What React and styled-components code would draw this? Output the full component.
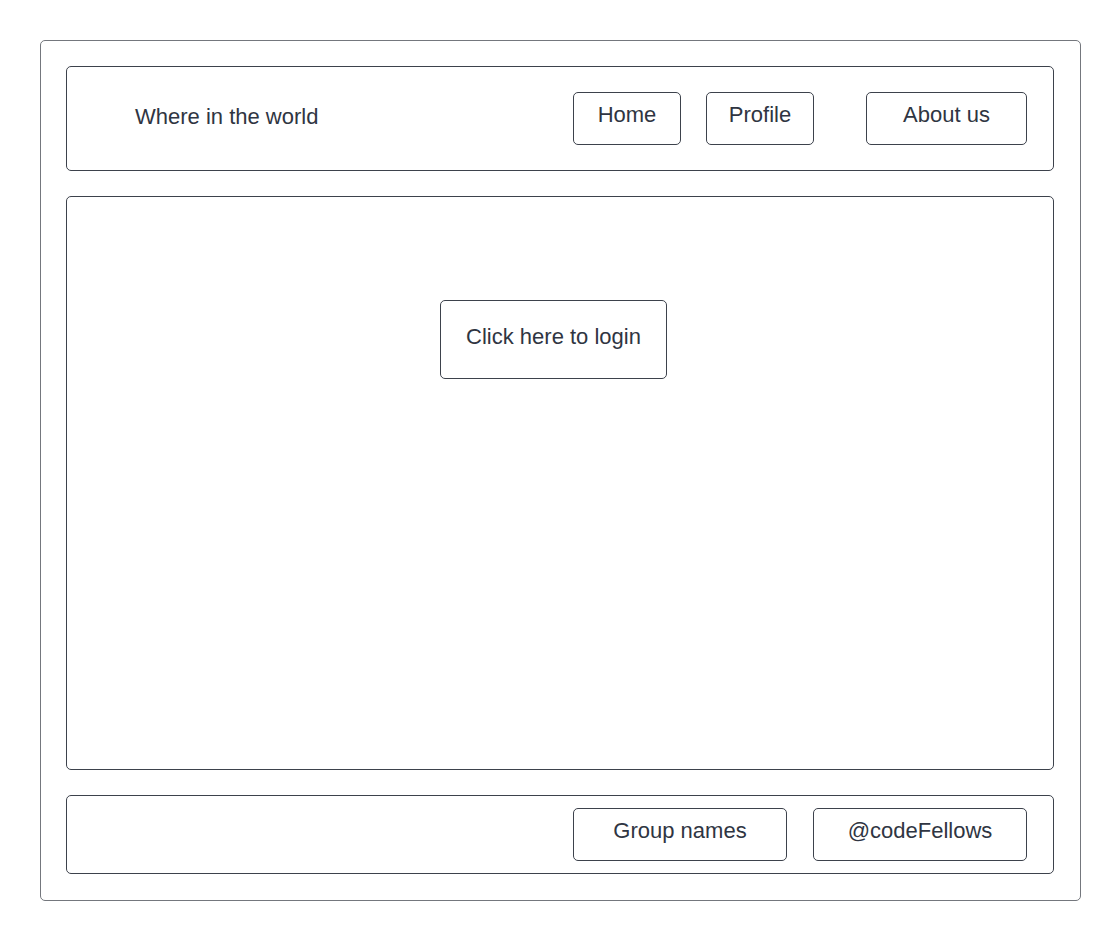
import React from 'react';
import styled, { createGlobalStyle } from 'styled-components';

const GlobalStyle = createGlobalStyle`
  html, body {
    margin: 0;
    padding: 0;
    background: #fff;
  }
  body {
    font-family: "Liberation Sans", Arial, sans-serif;
    color: #2f3542;
  }
  * {
    box-sizing: border-box;
  }
`;

const Frame = styled.div`
  margin: 40px 0 0 40px;
  width: 1041px;
  height: 861px;
  padding: 25px;
  border: 1px solid #74777d;
  border-radius: 5px;
  display: flex;
  flex-direction: column;
  gap: 25px;
`;

const Panel = styled.div`
  width: 988px;
  height: ${props => props.h}px;
  border: 1px solid #3d424c;
  border-radius: 5px;
  display: flex;
`;

const Header = styled(Panel)`
  align-items: center;
  padding: 0 26px 0 68px;
`;

const Title = styled.div`
  flex: 1;
  font-size: 22px;
  padding-bottom: 4px;
`;

const Main = styled(Panel)`
  align-items: flex-start;
  padding: 103px 0 0 373px;
`;

const Footer = styled(Panel)`
  align-items: flex-start;
  justify-content: flex-end;
  padding: 12px 26px 0 0;
  gap: 26px;
`;

const Button = styled.div`
  width: ${props => props.w}px;
  height: ${props => props.h || 53}px;
  margin-left: ${props => props.ml || 0}px;
  border: 1px solid #3d424c;
  border-radius: 5px;
  display: flex;
  align-items: center;
  justify-content: center;
  padding-bottom: ${props => props.pb || 7}px;
  font-size: 22px;
  color: #2f3542;
`;

const App = () => (
  <>
    <GlobalStyle />
    <Frame>
      <Header h={105}>
        <Title>Where in the world</Title>
        <Button w={108}>Home</Button>
        <Button w={108} ml={25}>Profile</Button>
        <Button w={161} ml={52}>About us</Button>
      </Header>
      <Main h={574}>
        <Button w={227} h={79} pb={6}>Click here to login</Button>
      </Main>
      <Footer h={79}>
        <Button w={214}>Group names</Button>
        <Button w={214}>@codeFellows</Button>
      </Footer>
    </Frame>
  </>
);

export default App;
